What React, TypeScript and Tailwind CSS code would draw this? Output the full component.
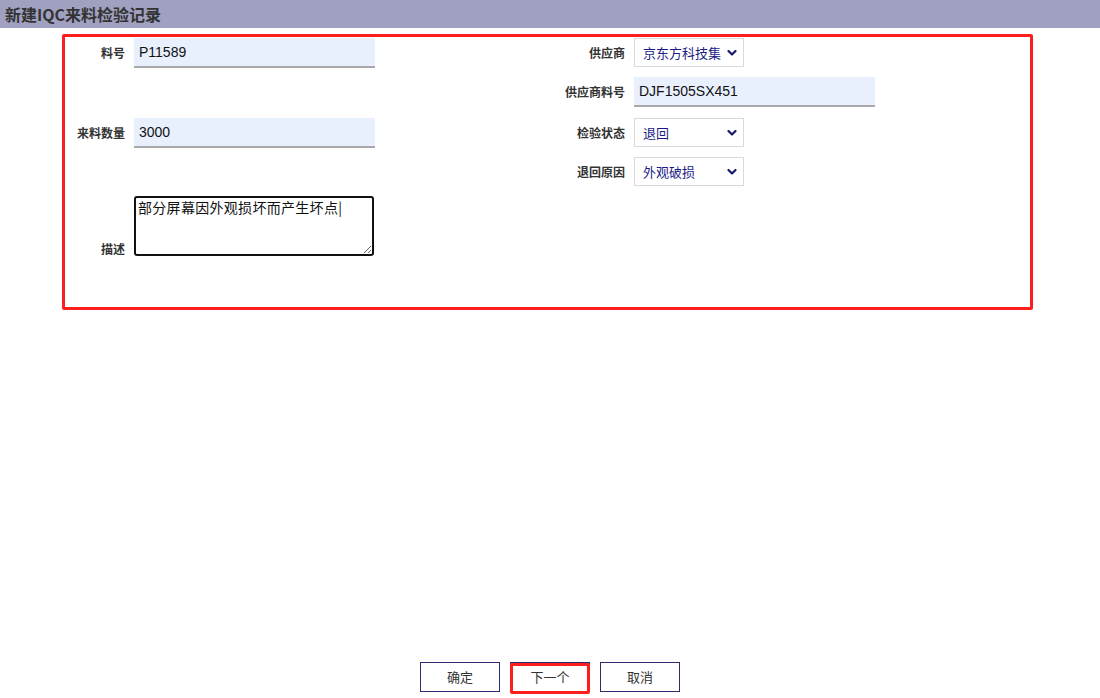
import React from "react";

const cjk = '"Noto Sans CJK SC", "Liberation Sans", sans-serif';
const latin = '"Liberation Sans", "Noto Sans CJK SC", sans-serif';

function Chevron() {
  return (
    <svg width="10" height="7" viewBox="0 0 10 7" className="absolute right-[6px] top-1/2 -translate-y-1/2 pointer-events-none">
      <polyline points="1.5,1.5 5,5 8.5,1.5" fill="none" stroke="#1a1a6e" strokeWidth="2.2" strokeLinecap="round" strokeLinejoin="round" />
    </svg>
  );
}

function FakeSelect({ value, h = "h-[29px]" }: { value: string; h?: string }) {
  return (
    <div className={`relative w-[110px] ${h} bg-white border border-[#d9d9d9] flex items-center pl-[8px]`}>
      <span className="text-[13px] text-[#1c1c85] whitespace-nowrap leading-[20px]" style={{ fontFamily: cjk }}>{value}</span>
      <Chevron />
    </div>
  );
}

function TextInput({ value, w = "w-[241px]" }: { value: string; w?: string }) {
  return (
    <div className={`${w} h-[30px] bg-[#e8f0fe] border-b-2 border-[#a9a9a9] flex items-center pl-[5px]`}>
      <span className="text-[14px] text-[#111]" style={{ fontFamily: latin }}>{value}</span>
    </div>
  );
}

function Label({ children, w }: { children: React.ReactNode; w: string }) {
  return (
    <div className={`${w} shrink-0 text-right text-[12px] font-bold text-[#333]`} style={{ fontFamily: cjk }}>
      {children}
    </div>
  );
}

export default function App() {
  return (
    <div className="w-[1100px] h-[698px] bg-white flex flex-col" style={{ fontFamily: cjk }}>
      <div className="h-[28px] bg-[#a0a0c0] flex items-center pl-[5px]">
        <span className="text-[16px] font-bold text-[#333]" style={{ fontFamily: cjk }}>新建IQC来料检验记录</span>
      </div>

      <div className="ml-[62px] mt-[6px] w-[971px] h-[276px] border-[3px] border-[#ff1e1e] rounded-[2px] flex">
        {/* left column */}
        <div className="w-[483px] flex flex-col pt-[1px]">
          <div className="flex items-center gap-[9px]">
            <Label w="w-[60px]">料号</Label>
            <TextInput value="P11589" />
          </div>
          <div className="flex items-center gap-[9px] mt-[50px]">
            <Label w="w-[60px]">来料数量</Label>
            <TextInput value="3000" />
          </div>
          <div className="flex items-end gap-[9px] mt-[48px]">
            <Label w="w-[60px]">
              <span className="leading-none block pb-[1px]">描述</span>
            </Label>
            <textarea
              className="w-[240px] h-[60px] border-2 border-[#111] rounded-[3px] px-[2px] py-[1px] text-[14px] text-[#111] bg-white outline-none tracking-[0.3px]"
              style={{ fontFamily: cjk, lineHeight: "16px" }}
              defaultValue="部分屏幕因外观损坏而产生坏点|"
            />
          </div>
        </div>

        {/* right column */}
        <div className="flex flex-col pt-[1px]">
          <div className="flex items-center gap-[9px]">
            <Label w="w-[77px]">供应商</Label>
            <FakeSelect value="京东方科技集" />
          </div>
          <div className="flex items-center gap-[9px] mt-[10px]">
            <Label w="w-[77px]">供应商料号</Label>
            <TextInput value="DJF1505SX451" />
          </div>
          <div className="flex items-center gap-[9px] mt-[11px]">
            <Label w="w-[77px]">检验状态</Label>
            <FakeSelect value="退回" />
          </div>
          <div className="flex items-center gap-[9px] mt-[10px]">
            <Label w="w-[77px]">退回原因</Label>
            <FakeSelect value="外观破损" />
          </div>
        </div>
      </div>

      <div className="flex-1" />

      <div className="flex justify-center gap-[10px] pb-[6px]">
        <button className="w-[80px] h-[30px] border border-[#2b2b6e] bg-white text-[13px] text-[#333]" style={{ fontFamily: cjk }}>确定</button>
        <button className="relative w-[80px] h-[30px] border border-[#2b2b6e] bg-white text-[13px] text-[#333]" style={{ fontFamily: cjk }}>
          下一个
          <span className="absolute -left-[1px] -right-[1px] top-0 -bottom-[3px] border-[3px] border-[#ff1e1e] rounded-[2px] pointer-events-none" />
        </button>
        <button className="w-[80px] h-[30px] border border-[#2b2b6e] bg-white text-[13px] text-[#333]" style={{ fontFamily: cjk }}>取消</button>
      </div>
    </div>
  );
}
